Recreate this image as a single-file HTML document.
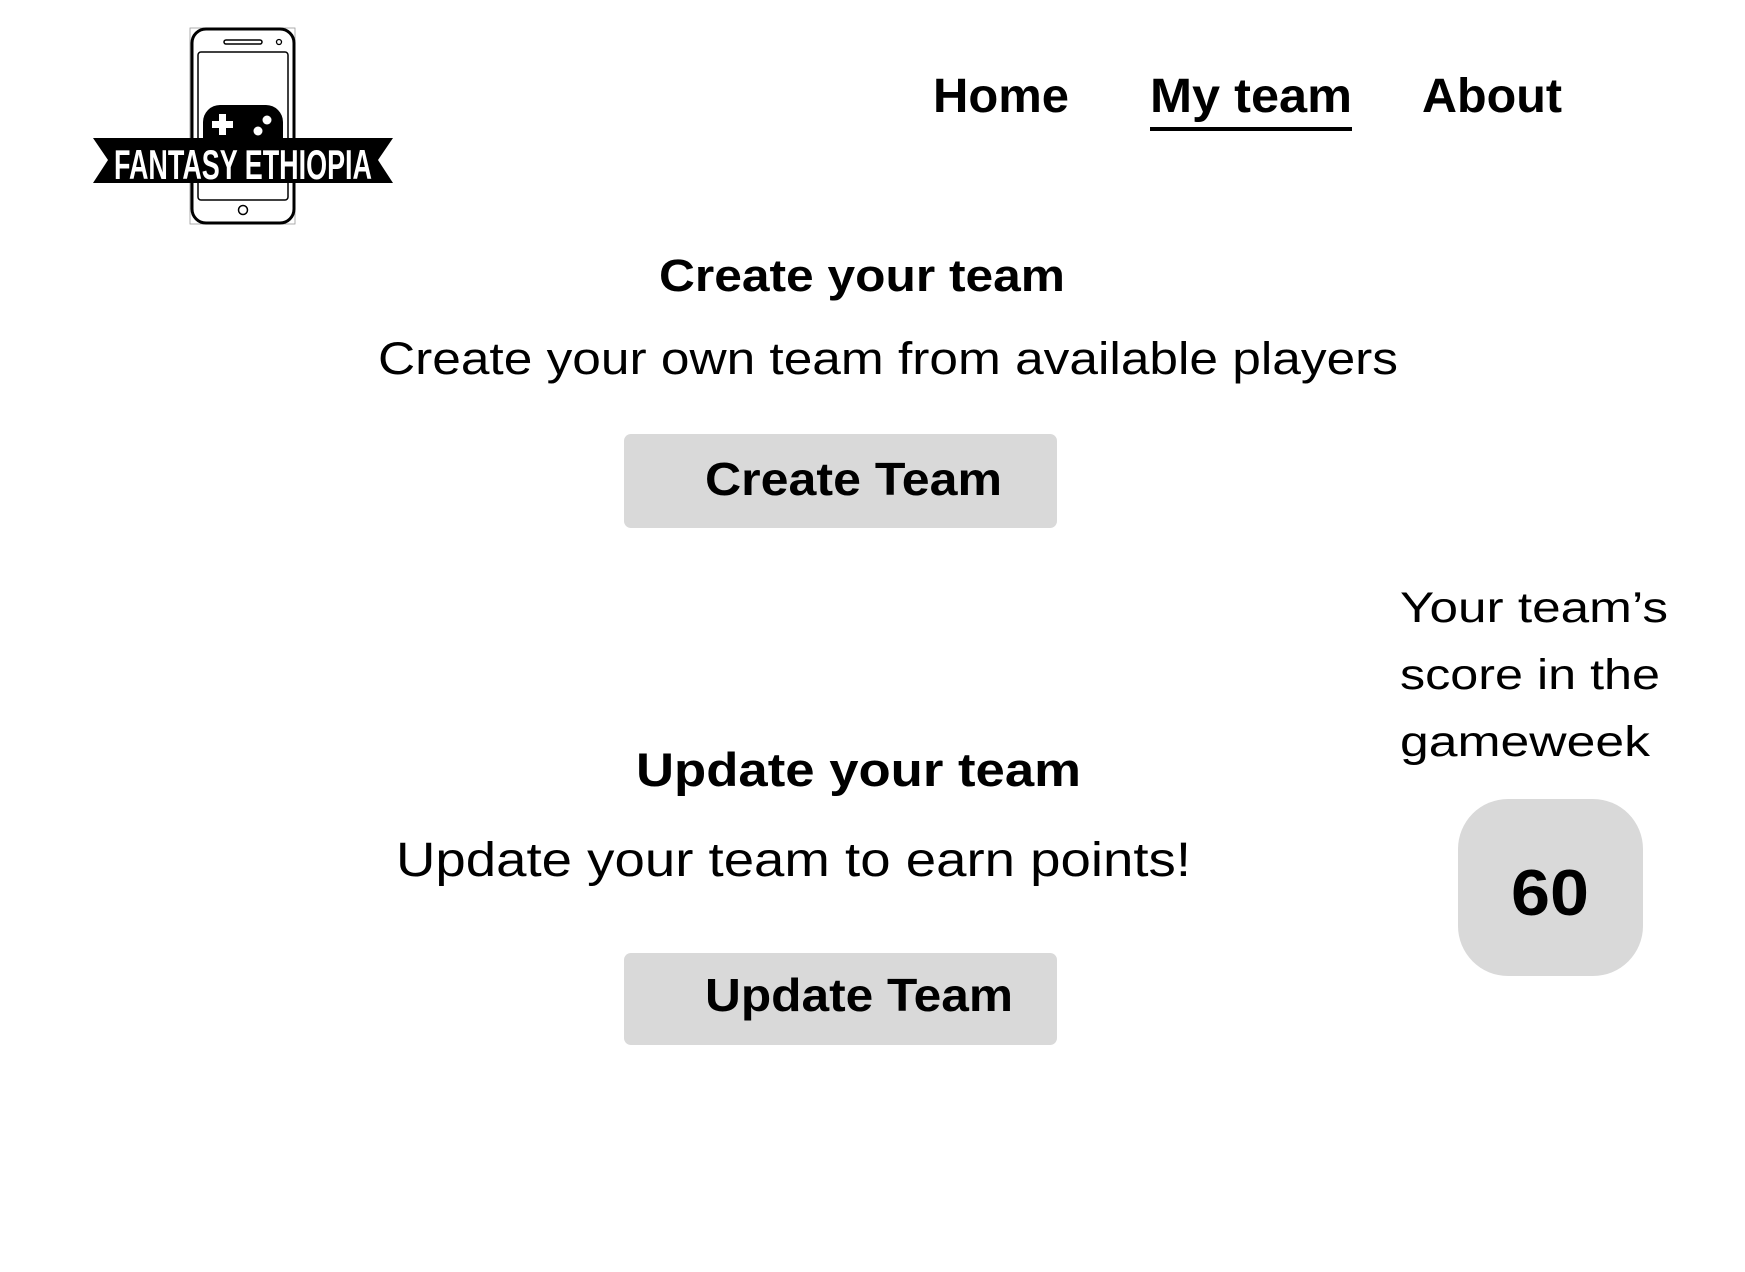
<!DOCTYPE html>
<html><head><meta charset="utf-8"><style>
html,body{margin:0;padding:0;background:#fff;width:1745px;height:1272px;overflow:hidden}
svg{display:block}
text{font-family:"Liberation Sans",Arial,sans-serif;fill:#000}
.b{font-weight:bold}
</style></head><body>
<svg width="1745" height="1272" viewBox="0 0 1745 1272" xmlns="http://www.w3.org/2000/svg">
<!-- logo -->
<rect x="190" y="28" width="105" height="196" fill="none" stroke="#999" stroke-width="0.8"/>
<rect x="192" y="29" width="102" height="194" rx="14" fill="#fff" stroke="#000" stroke-width="3"/>
<rect x="198" y="52" width="90" height="148" rx="3" fill="none" stroke="#000" stroke-width="1.5"/>
<rect x="224" y="40" width="38" height="4" rx="2" fill="none" stroke="#000" stroke-width="1.5"/>
<circle cx="279" cy="42" r="2.5" fill="none" stroke="#000" stroke-width="1.3"/>
<circle cx="243" cy="210" r="4.5" fill="none" stroke="#000" stroke-width="1.5"/>
<path d="M203 140 L203 122 A17 17 0 0 1 220 105 L266 105 A17 17 0 0 1 283 122 L283 140 Z" fill="#000"/>
<path d="M219 114 h7 v7 h7 v7 h-7 v7 h-7 v-7 h-7 v-7 h7 z" fill="#fff"/>
<circle cx="267" cy="120" r="4.5" fill="#fff"/>
<circle cx="258" cy="131" r="4.5" fill="#fff"/>
<polygon points="93,138 393,138 378,160 393,183 93,183 108,160" fill="#000"/>
<text x="114" y="179" font-size="42" textLength="258" lengthAdjust="spacingAndGlyphs" style="fill:#fff;font-family:'Liberation Sans Narrow','Liberation Sans',sans-serif;font-weight:bold">FANTASY ETHIOPIA</text>
<!-- nav -->
<text class="b" x="933" y="112" font-size="48" textLength="136" lengthAdjust="spacingAndGlyphs">Home</text>
<text class="b" x="1150" y="112" font-size="48" textLength="202" lengthAdjust="spacingAndGlyphs">My team</text>
<rect x="1150" y="127" width="202" height="4" fill="#000"/>
<text class="b" x="1422" y="112" font-size="48" textLength="140" lengthAdjust="spacingAndGlyphs">About</text>
<!-- section 1 -->
<text class="b" x="659" y="291" font-size="45" textLength="406" lengthAdjust="spacingAndGlyphs">Create your team</text>
<text x="378" y="374" font-size="45" textLength="1020" lengthAdjust="spacingAndGlyphs">Create your own team from available players</text>
<rect x="624" y="434" width="433" height="94" rx="7" fill="#d9d9d9"/>
<text class="b" x="705" y="495" font-size="46" textLength="297" lengthAdjust="spacingAndGlyphs">Create Team</text>
<!-- section 2 -->
<text class="b" x="636" y="786" font-size="47" textLength="445" lengthAdjust="spacingAndGlyphs">Update your team</text>
<text x="396" y="876" font-size="48" textLength="795" lengthAdjust="spacingAndGlyphs">Update your team to earn points!</text>
<rect x="624" y="953" width="433" height="92" rx="7" fill="#d9d9d9"/>
<text class="b" x="705" y="1011" font-size="46" textLength="308" lengthAdjust="spacingAndGlyphs">Update Team</text>
<!-- score -->
<text x="1400" y="622" font-size="43" textLength="268" lengthAdjust="spacingAndGlyphs">Your team’s</text>
<text x="1400" y="689" font-size="43" textLength="260" lengthAdjust="spacingAndGlyphs">score in the</text>
<text x="1400" y="756" font-size="43" textLength="250" lengthAdjust="spacingAndGlyphs">gameweek</text>
<rect x="1458" y="799" width="185" height="177" rx="50" fill="#d9d9d9"/>
<text class="b" x="1511" y="915" font-size="65" textLength="78" lengthAdjust="spacingAndGlyphs">60</text>
</svg>
</body></html>
